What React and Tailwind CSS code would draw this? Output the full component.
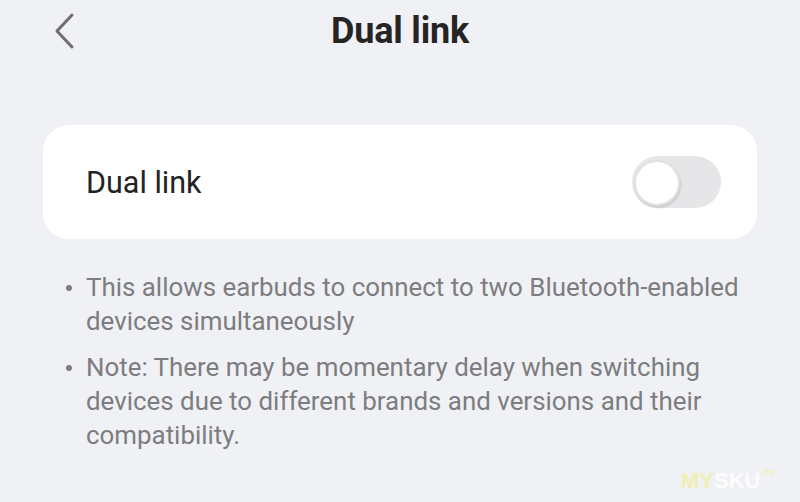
import { ChevronLeft } from 'lucide-react';

export default function App() {
  return (
    <div className="relative w-[800px] h-[502px] overflow-hidden bg-[#f0f1f5] font-['Roboto',sans-serif]">
      <header className="relative flex items-center justify-center h-[64px]">
        <button className="absolute left-[48px] top-[11px] text-[#6e6e70]">
          <svg width="32" height="40" viewBox="0 0 32 40" fill="none">
            <path d="M24 4 L9 20 L24 36" stroke="currentColor" strokeWidth="3" strokeLinecap="round" strokeLinejoin="round" />
          </svg>
        </button>
        <h1 className="text-[36px] font-bold text-[#252525] tracking-[-0.2px] mt-[-2px]">Dual link</h1>
      </header>

      <div className="mx-[43px] mt-[61px] h-[114px] bg-white rounded-[26px] flex items-center justify-between pl-[43px] pr-[36px]">
        <span className="text-[30.5px] text-[#232323] mt-[1px]">Dual link</span>
        <div className="relative w-[89px] h-[52px] rounded-full bg-[#e6e6e8]">
          <div className="absolute left-[2px] top-[4px] w-[46px] h-[46px] rounded-full bg-white border-[2px] border-[#e1e1e3] shadow-[1px_2px_2px_rgba(0,0,0,0.12)]" />
        </div>
      </div>

      <ul className="mt-[31px] pl-[86px] pr-[10px] text-[25.9px] leading-[34px] text-[#7d7d80] whitespace-nowrap">
        <li className="relative">
          <span className="absolute left-[-20px] top-[15px] w-[6px] h-[6px] rounded-full bg-[#7d7d80]" />
          This allows earbuds to connect to two Bluetooth-enabled<br />
          devices simultaneously
        </li>
        <li className="relative mt-[12px]">
          <span className="absolute left-[-20px] top-[15px] w-[6px] h-[6px] rounded-full bg-[#7d7d80]" />
          Note: There may be momentary delay when switching<br />
          devices due to different brands and versions and their<br />
          compatibility.
        </li>
      </ul>

      <div className="absolute left-[681px] top-[470px] flex items-start font-['Liberation_Sans',sans-serif] font-bold">
        <span className="text-[22px] leading-[22px] text-[#f1ee86]/60">MY</span>
        <span className="text-[22px] leading-[22px] text-white/80">SKU</span>
        <span className="text-[9px] leading-[9px] text-[#f1ee86]/70 ml-[2px] -mt-[2px]">.ru</span>
      </div>
    </div>
  );
}
